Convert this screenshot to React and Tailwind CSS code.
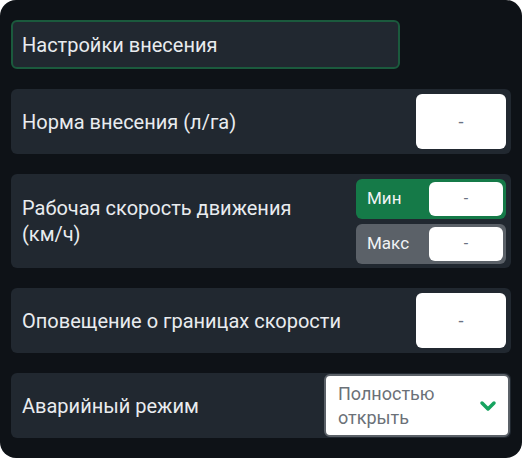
import { ChevronDown } from "lucide-react";

function ValueBox({ className = "" }) {
  return (
    <div
      className={`flex items-center justify-center rounded-md bg-white text-[18px] text-gray-500 ${className}`}
    >
      -
    </div>
  );
}

function RangePill({ label, tone }) {
  return (
    <div
      className={`flex h-[40px] w-[150px] items-center justify-between rounded-md pl-[11px] pr-[3px] ${tone}`}
    >
      <span className="text-[17px] text-[#f1f3f5]">{label}</span>
      <ValueBox className="h-[34px] w-[74px] !text-[16px]" />
    </div>
  );
}

export default function App() {
  return (
    <div className="h-[460px] w-[522px] bg-white font-['Roboto',sans-serif] font-normal">
      <div className="flex h-[458px] flex-col gap-[20px] rounded-[16px] bg-[#0e1217] px-[11px] pt-[20px] text-[#e9ecef]">
        <div className="flex h-[49px] w-[389px] items-center rounded-md border-2 border-[#1b5a3d] bg-[#212830] px-[9px] text-[20px]">
          Настройки внесения
        </div>

        <div className="flex h-[65px] items-center justify-between rounded-md bg-[#212830] pl-[11px] pr-[5px]">
          <span className="text-[20px]">Норма внесения (л/га)</span>
          <ValueBox className="h-[55px] w-[90px]" />
        </div>

        <div className="flex h-[94px] items-center justify-between rounded-md bg-[#212830] pl-[11px] pr-[5px]">
          <span className="w-[300px] text-[20px] leading-[26px]">
            Рабочая скорость движения (км/ч)
          </span>
          <div className="flex flex-col gap-[5px]">
            <RangePill label="Мин" tone="bg-[#157a48]" />
            <RangePill label="Макс" tone="bg-[#5b6168]" />
          </div>
        </div>

        <div className="flex h-[65px] items-center justify-between rounded-md bg-[#212830] pl-[11px] pr-[5px]">
          <span className="text-[20px]">Оповещение о границах скорости</span>
          <ValueBox className="h-[55px] w-[90px]" />
        </div>

        <div className="flex h-[65px] items-center justify-between rounded-md bg-[#212830] pl-[11px] pr-[1px]">
          <span className="text-[20px]">Аварийный режим</span>
          <div className="flex h-[63px] w-[186px] items-center justify-between rounded-md border-2 border-[#5b6168] bg-white pl-[12px] pr-[8px]">
            <span className="text-[18px] leading-[24px] text-[#6b7178]">
              Полностью
              <br />
              открыть
            </span>
            <ChevronDown className="h-[24px] w-[24px] text-[#16a35f]" strokeWidth={3.5} />
          </div>
        </div>
      </div>
    </div>
  );
}
